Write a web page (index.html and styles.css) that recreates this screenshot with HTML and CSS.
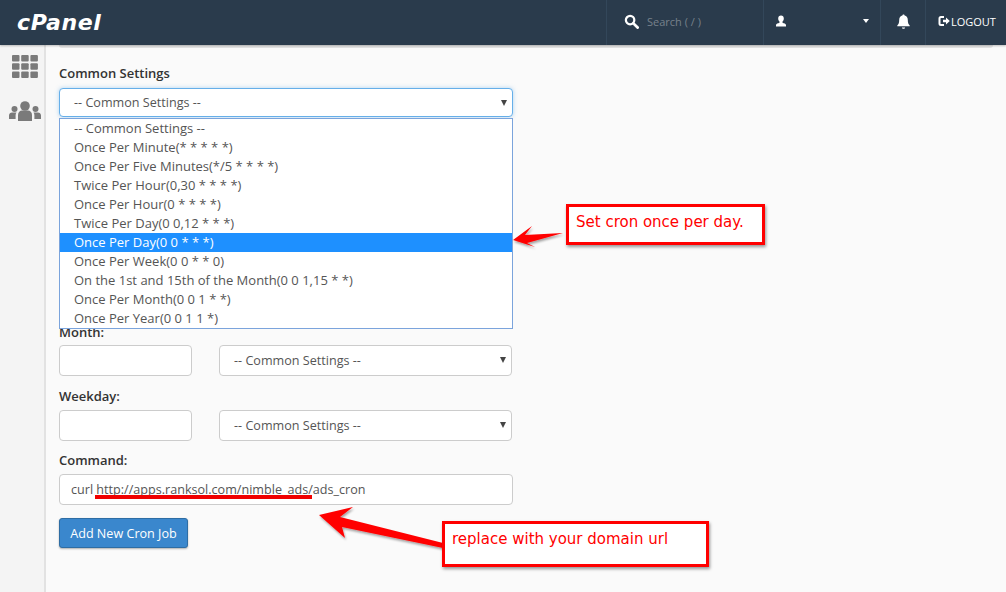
FILE: index.html
```html
<!DOCTYPE html>
<html lang="en">
<head>
    <meta charset="UTF-8">
    <title>Cron Jobs - cPanel</title>
    <link rel="stylesheet" href="styles.css">
</head>
<body>
    <header class="topbar">
        <div class="logo">cPanel</div>
        <div class="top-right">
            <div class="top-cell search-cell">
                <svg class="icon-search" viewBox="0 0 16 16" width="15" height="15"><circle cx="6.500" cy="6.500" r="4.500" fill="none" stroke="#fff" stroke-width="2.400"/><path d="M10 10l4.500 4.500" stroke="#fff" stroke-width="3" stroke-linecap="round"/></svg>
                <span class="search-text">Search ( / )</span>
            </div>
            <div class="top-cell user-cell">
                <svg viewBox="0 0 12 12" width="12" height="12"><path d="M6 0.500c1.800 0 2.800 1.300 2.800 3 0 1.200-.5 2.300-1.300 3v1.200c1.500.5 3.500 1 3.500 2.300v1.500H1V10c0-1.300 2-1.800 3.500-2.300V6.500C3.700 5.800 3.200 4.700 3.200 3.500c0-1.700 1-3 2.800-3z" fill="#fff"/></svg>
                <span class="caret"></span>
            </div>
            <div class="top-cell bell-cell">
                <svg viewBox="0 0 14 14" width="15" height="15"><path d="M7 0.500c.6 0 1 .4 1 .9 2 .4 3 2 3 4 0 3 .7 4.300 1.800 5.400v.7H1.200v-.7C2.300 9.700 3 8.400 3 5.400c0-2 1-3.600 3-4 0-.5.400-.9 1-.9zM5.500 12.500h3c0 .7-.7 1.200-1.500 1.200s-1.500-.5-1.500-1.200z" fill="#fff"/></svg>
            </div>
            <div class="top-cell logout-cell">
                <svg viewBox="0 0 12 12" width="12" height="12"><path d="M6 2H3a1.500 1.500 0 0 0-1.500 1.500v5A1.500 1.500 0 0 0 3 10h3" fill="none" stroke="#fff" stroke-width="2"/><path d="M5 4.800h3V2.500L11.800 6 8 9.500V7.200H5z" fill="#fff"/></svg>
                <span>LOGOUT</span>
            </div>
        </div>
    </header>

    <div class="page">
        <nav class="sidebar">
            <svg class="side-grid" viewBox="0 0 26 23" width="26" height="23">
                <g fill="#7a7a7a">
                    <rect x="0" y="0" width="7.500" height="6.500" rx="1"/><rect x="9.200" y="0" width="7.500" height="6.500" rx="1"/><rect x="18.400" y="0" width="7.500" height="6.500" rx="1"/>
                    <rect x="0" y="8.200" width="7.500" height="6.500" rx="1"/><rect x="9.200" y="8.200" width="7.500" height="6.500" rx="1"/><rect x="18.400" y="8.200" width="7.500" height="6.500" rx="1"/>
                    <rect x="0" y="16.400" width="7.500" height="6.500" rx="1"/><rect x="9.200" y="16.400" width="7.500" height="6.500" rx="1"/><rect x="18.400" y="16.400" width="7.500" height="6.500" rx="1"/>
                </g>
            </svg>
            <svg class="side-users" viewBox="0 0 32 20" width="32" height="20">
                <g fill="#7a7a7a">
                    <circle cx="16" cy="5" r="4.800"/><path d="M9 20v-6c0-3 2-4.500 4-4.500h6c2 0 4 1.500 4 4.500v6z"/>
                    <circle cx="5.500" cy="8" r="3"/><path d="M0 18v-3.500C0 12.500 1.500 11.500 3 11.500h4.500c-.6.800-.9 1.700-.9 2.800V18z"/>
                    <circle cx="26.500" cy="8" r="3"/><path d="M32 18v-3.500c0-2-1.500-3-3-3h-4.500c.6.800.9 1.700.9 2.800V18z"/>
                </g>
            </svg>
        </nav>

        <main class="content">
            <div class="panel-edge"></div>
            <form class="cron-form">
                <div class="common-block">
                    <label class="field-label common-label">Common Settings</label>
                    <div class="fake-select focused">-- Common Settings --</div>
                    <ul class="dropdown">
                        <li>-- Common Settings --</li>
                        <li>Once Per Minute(* * * * *)</li>
                        <li>Once Per Five Minutes(*/5 * * * *)</li>
                        <li>Twice Per Hour(0,30 * * * *)</li>
                        <li>Once Per Hour(0 * * * *)</li>
                        <li>Twice Per Day(0 0,12 * * *)</li>
                        <li class="selected">Once Per Day(0 0 * * *)</li>
                        <li>Once Per Week(0 0 * * 0)</li>
                        <li>On the 1st and 15th of the Month(0 0 1,15 * *)</li>
                        <li>Once Per Month(0 0 1 * *)</li>
                        <li>Once Per Year(0 0 1 1 *)</li>
                    </ul>
                </div>

                <div class="time-row">
                    <label class="field-label">Month:</label>
                    <div class="row-inputs"><div class="small-input"></div><div class="fake-select">-- Common Settings --</div></div>
                </div>
                <div class="time-row weekday-row">
                    <label class="field-label">Weekday:</label>
                    <div class="row-inputs"><div class="small-input"></div><div class="fake-select">-- Common Settings --</div></div>
                </div>

                <div class="command-row">
                    <label class="field-label">Command:</label>
                    <div class="command-input">curl http://apps.ranksol.com/nimble_ads/ads_cron</div>
                </div>
                <button type="button" class="add-btn">Add New Cron Job</button>
            </form>
        </main>
    </div>

    <!-- screenshot annotations -->
    <div class="note note-cron">Set cron once per day.</div>
    <div class="note note-url">replace with your domain url</div>
    <div class="red-underline"></div>
    <svg class="arrows" width="1006" height="592" viewBox="0 0 1006 592">
        <defs>
            <filter id="arrowShadow" x="-20%" y="-20%" width="140%" height="160%">
                <feDropShadow dx="1" dy="2" stdDeviation="1" flood-color="#000" flood-opacity="0.35"/>
            </filter>
        </defs>
        <g fill="#ff0000" filter="url(#arrowShadow)">
            <path d="M513 240L532 226L525 235L563 233L527 243L535 247Z"/>
            <path d="M319 515L353 507L340 517L443 543L443 548L342 527L345 538Z"/>
        </g>
    </svg>
</body>
</html>
```

FILE: styles.css
```css
* {
    box-sizing: border-box;
}
html, body {
    height: 100%;
}
body {
    margin: 0;
    overflow: hidden;
    position: relative;
    font-family: "Open Sans", Arial, sans-serif;
    font-size: 13px;
    color: #555;
    background-color: #fafafa;
}
.topbar {
    height: 45px;
    display: flex;
    justify-content: space-between;
    background-color: #2a3b4c;
    box-shadow: 0 1px 2px rgba(0, 0, 0, 0.25);
    position: relative;
    z-index: 3;
}
.logo {
    padding: 10px 0 0 17px;
    font-family: "DejaVu Sans", Arial, sans-serif;
    font-size: 22px;
    font-weight: bold;
    font-style: italic;
    letter-spacing: 0.6px;
    color: #fff;
}
.top-right {
    display: flex;
}
.top-cell {
    display: flex;
    align-items: center;
    height: 45px;
    padding-bottom: 3px;
    border-left: 1px solid #33475a;
}
.search-cell {
    width: 157px;
    padding-left: 17px;
}
.search-text {
    margin-left: 8px;
    font-size: 11px;
    color: #77818b;
}
.user-cell {
    width: 117px;
    padding-left: 11px;
    justify-content: space-between;
    padding-right: 11px;
}
.caret {
    width: 0;
    height: 0;
    border-left: 3px solid transparent;
    border-right: 3px solid transparent;
    border-top: 4px solid #fff;
}
.bell-cell {
    width: 45px;
    justify-content: center;
}
.logout-cell {
    width: 81px;
    padding-left: 12px;
    font-size: 11px;
    color: #fff;
}
.logout-cell span {
    margin-left: 1px;
}
.page {
    display: flex;
    height: 547px;
}
.sidebar {
    width: 46px;
    flex-shrink: 0;
    display: flex;
    flex-direction: column;
    align-items: center;
    padding: 10px 0 0 6px;
    background-color: #f4f4f4;
    border-right: 2px solid #e2e2e2;
}
.side-users {
    margin-top: 23px;
}
.content {
    flex: 1;
    padding-left: 13px;
    position: relative;
}
.panel-edge {
    width: 934px;
    height: 3px;
    background-color: #e4e4e4;
    border-radius: 0 0 3px 3px;
}
.cron-form {
    width: 454px;
    padding-top: 15px;
}
.field-label {
    display: block;
    height: 23px;
    font-size: 13px;
    font-weight: 600;
    line-height: 20px;
    color: #333;
}
.common-label {
    height: 25px;
}
.common-block {
    position: relative;
    height: 259px;
}
.fake-select {
    position: relative;
    flex: 1;
    height: 31px;
    padding-left: 14px;
    line-height: 29px;
    font-size: 12.6px;
    color: #555;
    background-color: #fff;
    border: 1px solid #ccc;
    border-radius: 4px;
}
.fake-select::after {
    content: "";
    position: absolute;
    right: 5px;
    top: 11px;
    border-left: 3px solid transparent;
    border-right: 3px solid transparent;
    border-top: 6px solid #444;
}
.fake-select.focused {
    height: 29px;
    line-height: 27px;
    border-color: #66afe9;
    box-shadow: 0 0 4px rgba(102, 175, 233, 0.5);
}
.dropdown {
    position: absolute;
    left: 0;
    top: 55px;
    width: 454px;
    height: 211px;
    margin: 0;
    padding: 0;
    list-style: none;
    background-color: #fff;
    border: 1px solid #7ba4dc;
    z-index: 2;
}
.dropdown li {
    height: 19px;
    padding-left: 14px;
    line-height: 19px;
    font-size: 13px;
    color: #555;
}
.dropdown li.selected {
    background-color: #1e90ff;
    color: #fff;
}
.time-row {
    height: 65px;
}
.weekday-row {
    height: 64px;
}
.weekday-row .field-label {
    line-height: 18px;
}
.row-inputs {
    display: flex;
    gap: 27px;
    padding-right: 1px;
}
.small-input {
    width: 133px;
    height: 31px;
    background-color: #fff;
    border: 1px solid #ccc;
    border-radius: 4px;
}
.command-row {
    height: 67px;
}
.command-row .field-label {
    line-height: 18px;
}
.command-input {
    height: 31px;
    padding-left: 11px;
    line-height: 29px;
    font-size: 12.6px;
    color: #555;
    background-color: #fff;
    border: 1px solid #ccc;
    border-radius: 4px;
}
.add-btn {
    display: block;
    width: 129px;
    height: 30px;
    padding: 0;
    font-family: "Open Sans", Arial, sans-serif;
    font-size: 12.6px;
    color: #fff;
    background-color: #3a87cd;
    border: 1px solid #2e6da4;
    border-radius: 3px;
    box-shadow: 0 1px 2px rgba(0, 0, 0, 0.3);
}
.note {
    position: absolute;
    z-index: 5;
    font-family: Tahoma, "DejaVu Sans", sans-serif;
    font-size: 15px;
    color: #ff0000;
    background-color: #fff;
    border: 3px solid #ff0000;
    box-shadow: 1px 2px 3px rgba(0, 0, 0, 0.4);
}
.note-cron {
    left: 566px;
    top: 204px;
    width: 199px;
    height: 41px;
    padding: 6px 0 0 7px;
}
.note-url {
    left: 442px;
    top: 521px;
    width: 267px;
    height: 46px;
    padding: 6px 0 0 7px;
}
.red-underline {
    position: absolute;
    z-index: 5;
    left: 95px;
    top: 495px;
    width: 217px;
    height: 4px;
    background-color: #f00000;
}
.arrows {
    position: absolute;
    left: 0;
    top: 0;
    z-index: 4;
    pointer-events: none;
}
```
